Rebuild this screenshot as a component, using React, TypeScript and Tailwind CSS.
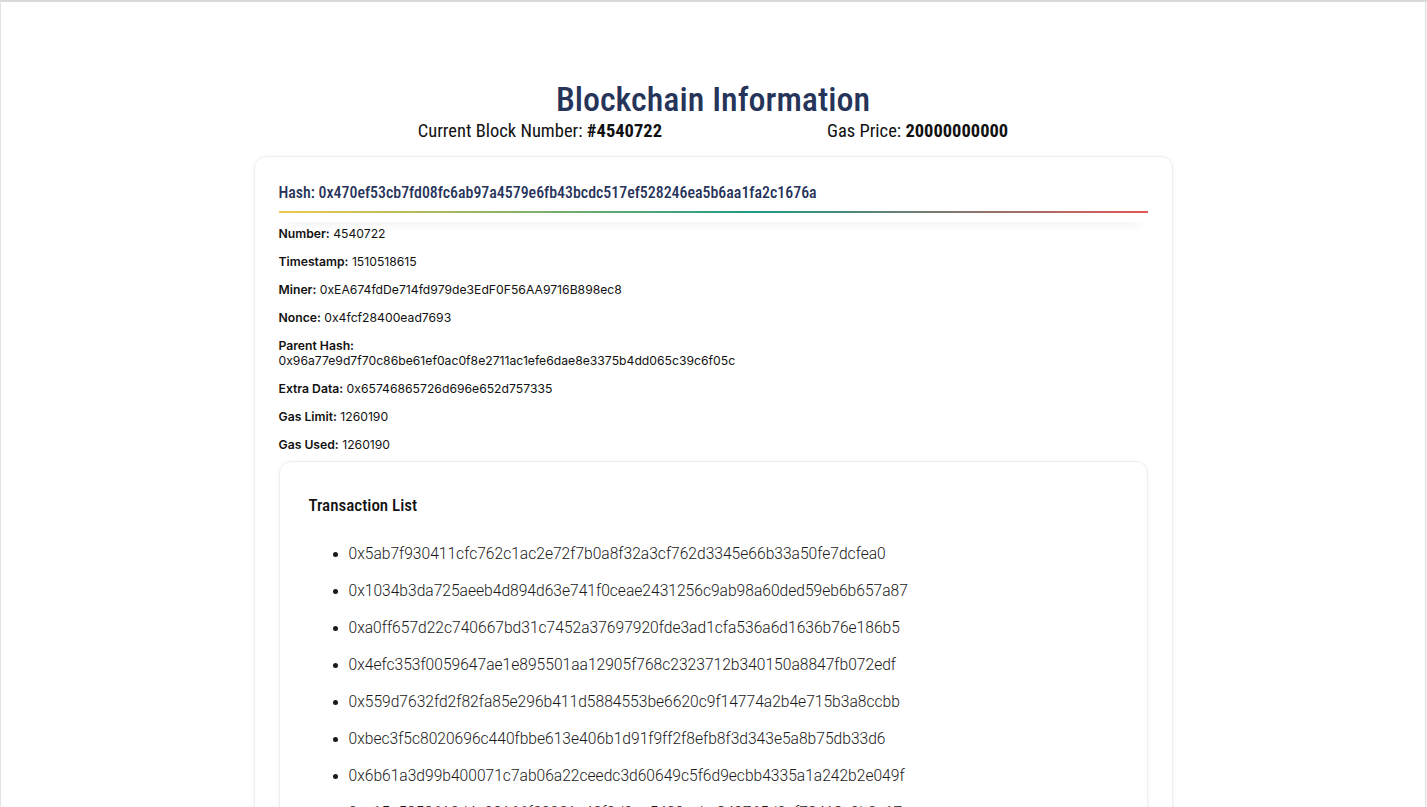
import React from "react";

const cond: React.CSSProperties = { fontFamily: 'Roboto, "Liberation Sans", sans-serif', fontStretch: "condensed" };

const txs = [
  "0x5ab7f930411cfc762c1ac2e72f7b0a8f32a3cf762d3345e66b33a50fe7dcfea0",
  "0x1034b3da725aeeb4d894d63e741f0ceae2431256c9ab98a60ded59eb6b657a87",
  "0xa0ff657d22c740667bd31c7452a37697920fde3ad1cfa536a6d1636b76e186b5",
  "0x4efc353f0059647ae1e895501aa12905f768c2323712b340150a8847fb072edf",
  "0x559d7632fd2f82fa85e296b411d5884553be6620c9f14774a2b4e715b3a8ccbb",
  "0xbec3f5c8020696c440fbbe613e406b1d91f9ff2f8efb8f3d343e5a8b75db33d6",
  "0x6b61a3d99b400071c7ab06a22ceedc3d60649c5f6d9ecbb4335a1a242b2e049f",
  "0xe15a5858613d4a09166f39231e43f9d0aa5499cebc849765d9cf78418c9b3a17",
];

const rows: [string, string][] = [
  ["Number:", "4540722"],
  ["Timestamp:", "1510518615"],
  ["Miner:", "0xEA674fdDe714fd979de3EdF0F56AA9716B898ec8"],
  ["Nonce:", "0x4fcf28400ead7693"],
];
const rows2: [string, string][] = [
  ["Extra Data:", "0x65746865726d696e652d757335"],
  ["Gas Limit:", "1260190"],
  ["Gas Used:", "1260190"],
];

export default function App() {
  return (
    <div className="h-[807px] overflow-hidden bg-white border-t-2 border-[#d9d9d9]">
      <div className="h-full ml-[1px] mr-[2px] bg-white shadow-[0_0_3px_rgba(0,0,0,0.3)]">
        <div className="pt-[75px] text-center">
          <h1 style={cond} className="text-[34px] leading-[44px] font-medium text-[#263459]">
            Blockchain Information
          </h1>
          <div style={cond} className="flex justify-center gap-[165px] text-[18.5px] leading-[22px] text-[#111] -mt-[1px]">
            <span>
              Current Block Number: <b className="font-bold">#4540722</b>
            </span>
            <span>
              Gas Price: <b className="font-bold">20000000000</b>
            </span>
          </div>
        </div>
        <div className="mx-auto mt-[14px] w-[919px] rounded-[12px] border border-[#eeeeee] shadow-[0_1px_4px_rgba(0,0,0,0.06)] px-[24px] pt-[25px]">
          <div className="shadow-[0_10px_12px_-8px_rgba(0,0,0,0.06)]">
            <h2 style={cond} className="text-[15.9px] leading-[22px] font-medium text-[#27335a]">
              Hash: 0x470ef53cb7fd08fc6ab97a4579e6fb43bcdc517ef528246ea5b6aa1fa2c1676a
            </h2>
            <div className="mt-[7px] h-[2px] bg-[linear-gradient(90deg,#f0c94a_0%,#1f9a86_55%,#e25858_100%)]" />
            <div className="h-[9px]" />
          </div>
          <div style={{ fontFamily: 'Inter, "Liberation Sans", sans-serif' }} className="pt-[4px] text-[12.2px] leading-[16px] text-[#111]">
            {rows.map(([k, v]) => (
              <p key={k} className="mb-[12px]">
                <b className="font-semibold">{k}</b> {v}
              </p>
            ))}
            <p className="mb-[13px] leading-[15px]">
              <b className="font-semibold">Parent Hash:</b>
              <br />
              0x96a77e9d7f70c86be61ef0ac0f8e2711ac1efe6dae8e3375b4dd065c39c6f05c
            </p>
            {rows2.map(([k, v]) => (
              <p key={k} className="mb-[12px]">
                <b className="font-semibold">{k}</b> {v}
              </p>
            ))}
          </div>
          <div className="-mt-[4px] rounded-[12px] border border-[#eeeeee] shadow-[0_1px_4px_rgba(0,0,0,0.05)] px-[29px] pt-[31px] pb-[30px]">
            <h3 style={cond} className="text-[17px] leading-[24px] font-medium text-[#111]">
              Transaction List
            </h3>
            <ul
              style={{ fontFamily: 'Roboto, "Liberation Sans", sans-serif' }}
              className="mt-[28px] list-disc pl-[40px] text-[15.6px] leading-[18px] font-light text-[#1a1a1a] flex flex-col gap-[19px]"
            >
              {txs.map((t) => (
                <li key={t}>{t}</li>
              ))}
            </ul>
          </div>
        </div>
      </div>
    </div>
  );
}
